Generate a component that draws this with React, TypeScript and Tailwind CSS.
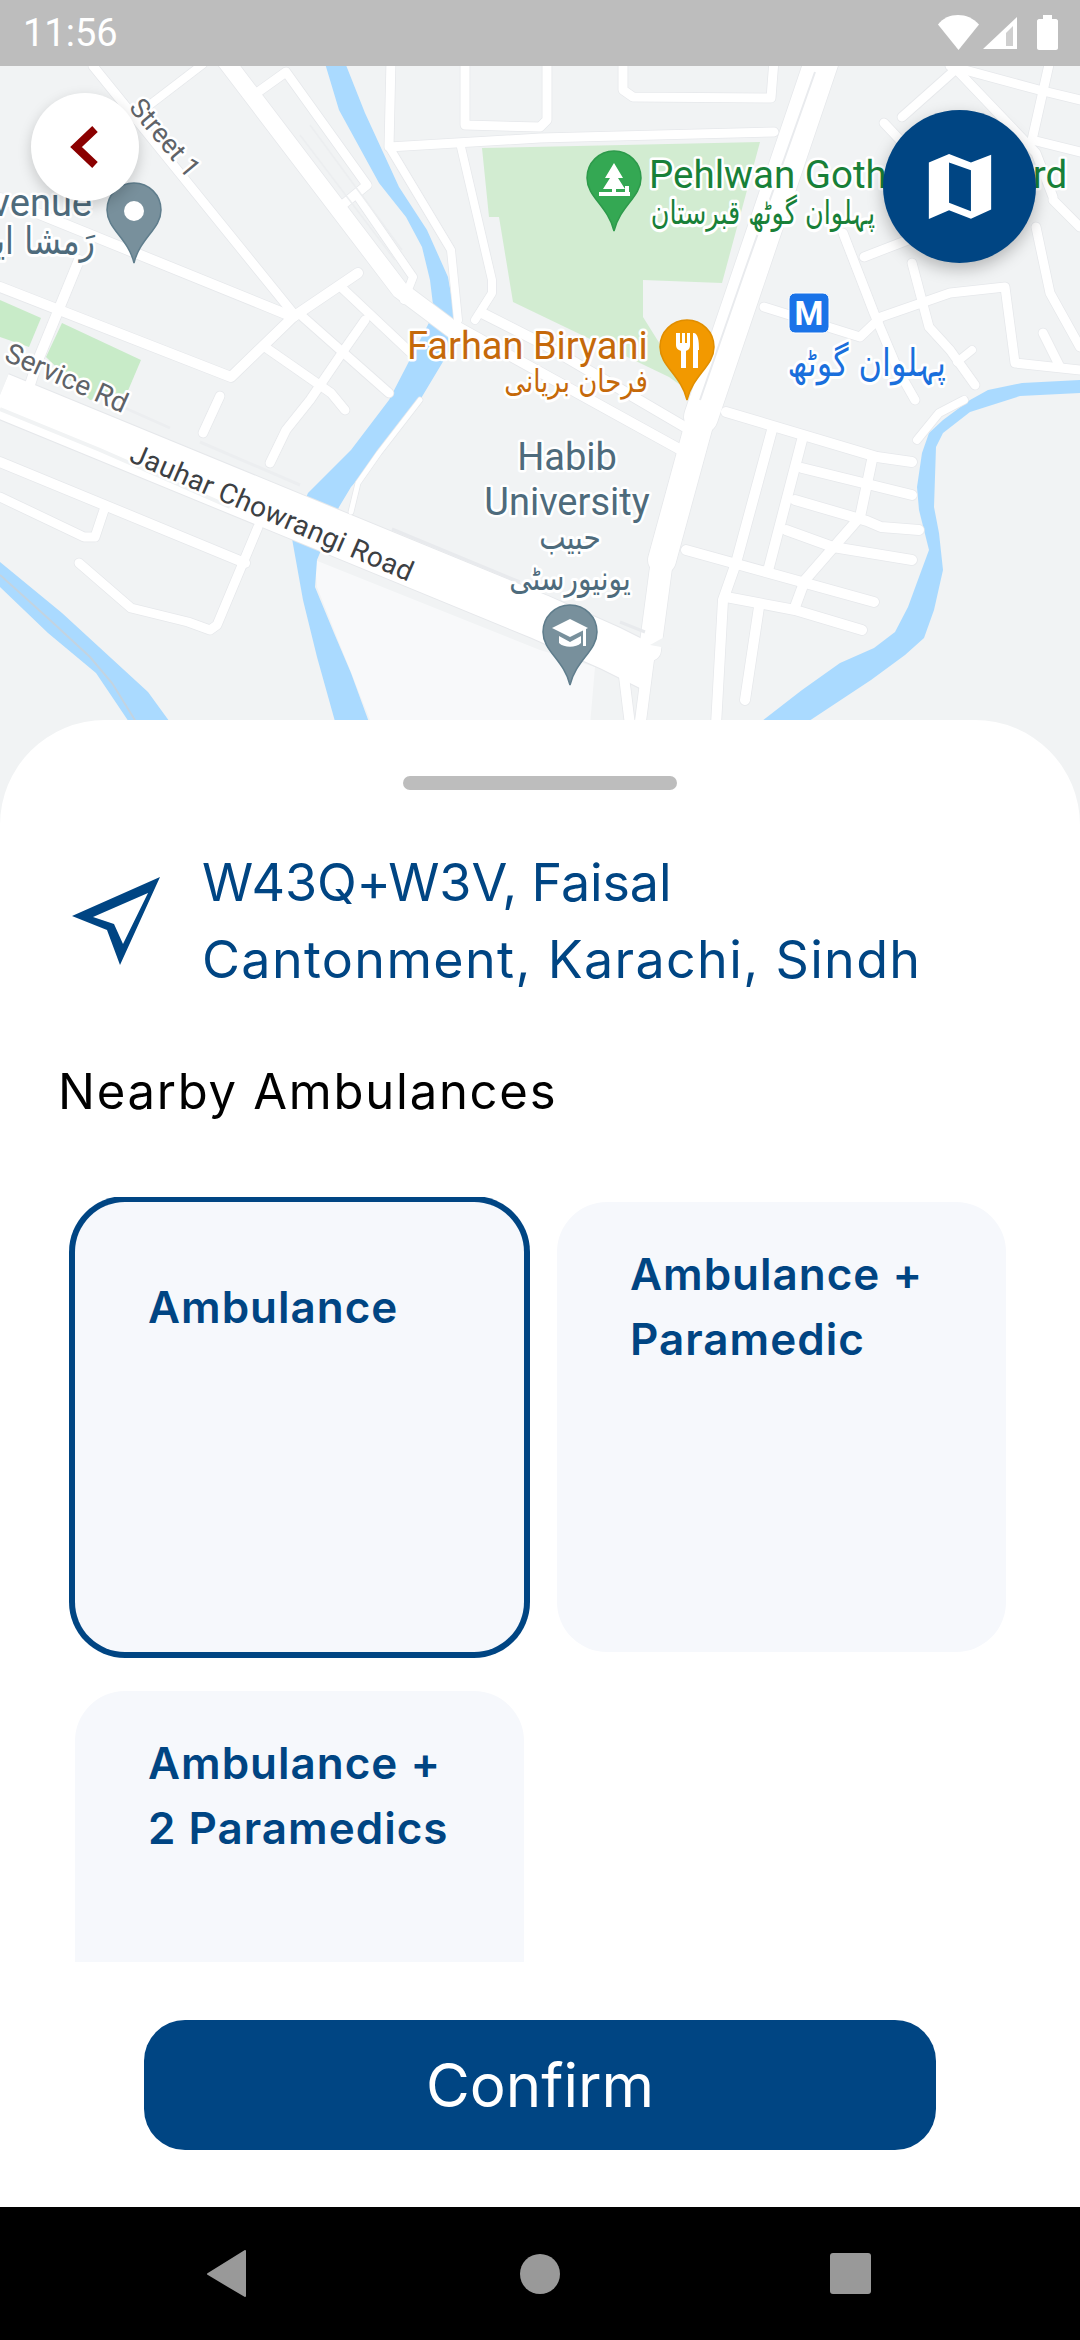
type Pt = [number, number]

const MAP_HEIGHT = 760

// roads: [width, points]
const roads: [number, Pt[]][] = [
  [9, [[93, 66], [293, 313]]],
  [17, [[225, 60], [400, 290], [460, 335]]],
  [9, [[251, 97], [286, 72], [367, 185], [340, 207]]],
  [8, [[358, 197], [413, 277], [404, 300]]],
  [8, [[143, 110], [203, 64]]],
  [10, [[0, 198], [293, 317]]],
  [10, [[0, 287], [231, 377], [293, 317], [358, 273]]],
  [10, [[79, 260], [38, 360], [25, 400]]],
  [9, [[303, 317], [389, 393]]],
  [9, [[341, 287], [410, 352]]],
  [9, [[365, 320], [344, 350], [310, 400], [286, 430], [270, 463]]],
  [9, [[265, 347], [331, 393], [345, 410]]],
  [9, [[220, 396], [203, 433]]],
  [10, [[0, 462], [245, 563]]],
  [9, [[0, 497], [84, 537], [95, 537], [105, 507]]],
  [9, [[79, 563], [131, 608], [188, 622], [210, 630], [217, 625], [258, 527]]],
  [5, [[420, 400], [379, 453], [358, 483], [351, 512]]],
  [9, [[391, 60], [389, 147], [540, 138], [774, 132]]],
  [9, [[465, 60], [465, 125], [540, 127], [547, 120], [547, 60]]],
  [9, [[623, 60], [623, 90], [633, 97], [771, 98], [774, 60]]],
  [8, [[391, 150], [451, 250], [458, 320]]],
  [8, [[461, 147], [492, 280], [492, 293], [475, 320]]],
  [10, [[482, 313], [545, 345], [690, 430]]],
  [10, [[458, 327], [681, 450]]],
  [34, [[822, 60], [701, 417]]],
  [28, [[701, 417], [662, 560]]],
  [22, [[662, 560], [650, 650]]],
  [11, [[651, 640], [640, 725]]],
  [10, [[622, 660], [630, 725]]],
  [10, [[726, 412], [877, 457], [912, 462]]],
  [10, [[802, 468], [912, 495]]],
  [10, [[795, 500], [867, 521], [881, 527], [919, 530]]],
  [10, [[786, 530], [833, 547], [912, 560]]],
  [10, [[686, 550], [874, 602]]],
  [10, [[726, 597], [795, 610], [862, 630]]],
  [10, [[772, 430], [736, 563], [723, 600], [716, 725]]],
  [10, [[802, 440], [769, 567]]],
  [10, [[872, 460], [860, 517], [805, 580], [795, 607]]],
  [10, [[759, 607], [745, 700]]],
  [8, [[917, 440], [939, 413], [964, 400]]],
  [9, [[955, 70], [902, 117]]],
  [9, [[884, 123], [900, 140]]],
  [9, [[953, 66], [1036, 153], [1053, 197]]],
  [9, [[950, 66], [1039, 90], [1080, 100]]],
  [9, [[1050, 60], [1032, 140], [1080, 152]]],
  [9, [[843, 233], [874, 313], [898, 370], [915, 400]]],
  [9, [[864, 257], [908, 240]]],
  [9, [[912, 263], [929, 327], [950, 350], [975, 385]]],
  [9, [[764, 307], [860, 337], [881, 317], [950, 293], [1005, 287], [1015, 363], [1080, 370]]],
  [9, [[1043, 333], [1060, 367]]],
  [9, [[1036, 227], [1050, 293], [1080, 347]]],
  [9, [[1053, 200], [1080, 227]]],
  [8, [[957, 362], [972, 350]]],
]

const line = (p: Pt[]) => p.map((q) => q.join(',')).join(' ')

function Pin({ x, y, fill, rim, children }: { x: number; y: number; fill: string; rim: string; children?: React.ReactNode }) {
  return (
    <g transform={`translate(${x} ${y})`}>
      <path
        d="M0 0C15 0 27 12 27 27C27 46 6 55 0 80C-6 55 -27 46 -27 27C-27 12 -15 0 0 0Z"
        fill={fill}
        stroke={rim}
        strokeWidth="1.5"
      />
      {children}
    </g>
  )
}

function MapLayer() {
  const halo = { paintOrder: 'stroke', stroke: '#ffffff', strokeWidth: 5, strokeLinejoin: 'round' as const }
  const roboto = 'Roboto, sans-serif'
  const urdu = '"DejaVu Sans", sans-serif'

  return (
    <svg className="block h-[760px] w-[1080px]" viewBox={`0 66 1080 ${MAP_HEIGHT}`}>
      <rect x="0" y="66" width="1080" height={MAP_HEIGHT} fill="#f1f3f4" />
      {/* parks */}
      <path d="M482 148L760 142L722 283L643 280L643 317L690 392L669 377L513 302L499 217L489 217Z" fill="#d2ecd1" />
      <path d="M0 300L41 318L29 347L0 337Z" fill="#c8ebc8" />
      <path d="M62 323L141 360L127 393L90 400L46 357Z" fill="#c8ebc8" />
      {/* university grounds */}
      <path d="M315 560L540 650L595 667L590 725L372 725L317 587Z" fill="#f8f9fa" />
      {/* water */}
      <path
        d="M324 60L339 110L379 183L406 217L422 247L430 280L434 313L389 400L351 450L308 493L291 533L303 600L317 657L336 725L370 725L351 673L334 633L315 587L317 560L339 507L351 487L389 443L420 400L456 340L456 323L448 277L427 230L399 187L365 113L344 60Z"
        fill="#aadaff"
      />
      <path d="M0 562L62 613L148 692L172 725L131 725L96 673L48 633L0 587Z" fill="#aadaff" />
      <path d="M0 575L50 620L90 657L112 683L138 725" fill="none" stroke="#c3d3e0" strokeWidth="2" />
      <path
        d="M1080 380L1022 383L988 390L970 400L943 420L929 433L922 453L917 487L919 510L929 550L919 577L908 607L895 632L874 648L840 663L802 690L757 725L803 725L871 680L905 655L924 638L934 610L943 570L939 533L934 507L936 447L943 433L970 412L1020 396L1080 393Z"
        fill="#aadaff"
      />
      {/* roads */}
      {roads.map(([w, pts], i) => (
        <polyline key={`o${i}`} points={line(pts)} fill="none" stroke="#e6e8eb" strokeWidth={w + 1.5} strokeLinecap="round" strokeLinejoin="round" />
      ))}
      <polyline points="0,395 540,617 610,648 650,668" fill="none" stroke="#e6e8eb" strokeWidth="47" />
      <polyline points="0,395 540,617 610,648 650,668" fill="none" stroke="#ffffff" strokeWidth="45" />
      {roads.map(([w, pts], i) => (
        <polyline key={`i${i}`} points={line(pts)} fill="none" stroke="#ffffff" strokeWidth={w} strokeLinecap="round" strokeLinejoin="round" />
      ))}
      {/* slivers of the divided carriageways */}
      <path d="M0 409L100 450L230 507" fill="none" stroke="#f1f3f4" strokeWidth="4" />
      <path d="M125 408L170 428M200 442L300 485" fill="none" stroke="#eceef0" strokeWidth="3" />
      <path d="M392 529L520 582M620 622L645 632" fill="none" stroke="#e8eaed" strokeWidth="3" />
      <path d="M815 72L745 270L700 400" fill="none" stroke="#e9ebee" strokeWidth="2" />
      <path d="M300 135L395 260M310 125L402 250" fill="none" stroke="#eceef0" strokeWidth="1.5" />
      <path d="M686 625L678 650L650 645" fill="#f1f3f4" />
      {/* labels */}
      <g fontFamily={roboto} fontSize="27" fill="#5f6368">
        <text transform="translate(128 108) rotate(50)" style={halo}>Street 1</text>
        <text transform="translate(3 360) rotate(24)" fontSize="28" style={halo}>Service Rd</text>
      </g>
      <text transform="translate(128 461) rotate(23.3)" fontFamily={roboto} fontSize="28" fill="#3c4043" letterSpacing="0.4" style={halo}>
        Jauhar Chowrangi Road
      </text>
      <g fontFamily={roboto} fontSize="38" fill="#4e6b7c" style={halo}>
        <text x="92" y="216" textAnchor="end">venue</text>
        <text x="567" y="470" textAnchor="middle">Habib</text>
        <text x="567" y="515" textAnchor="middle">University</text>
      </g>
      <g fontFamily={urdu} fill="#4e6b7c" style={halo}>
        <text transform="translate(95 254) scale(1 1.2)" fontSize="32" direction="rtl">رَمشا ایو</text>
        <text transform="translate(570 549) scale(1 1.2)" textAnchor="middle" fontSize="28" direction="rtl">حبیب</text>
        <text transform="translate(570 590) scale(1 1.2)" textAnchor="middle" fontSize="28" direction="rtl">یونیورسٹی</text>
      </g>
      <text x="649" y="188" fontFamily={roboto} fontSize="38.5" fill="#188038" style={halo}>Pehlwan Goth Graveyard</text>
      <text transform="translate(875 224) scale(1 1.3)" direction="rtl" fontFamily={urdu} fontSize="25.5" fill="#188038" style={halo}>پہلوان گوٹھ قبرستان</text>
      <text x="407" y="359" fontFamily={roboto} fontSize="38" fill="#c5690a" style={halo}>Farhan Biryani</text>
      <text transform="translate(648 392) scale(1 1.2)" direction="rtl" fontFamily={urdu} fontSize="26" fill="#c5690a" style={halo}>فرحان بریانی</text>
      <text transform="translate(946 376) scale(1 1.2)" direction="rtl" fontFamily={urdu} fontSize="32" fill="#1a6fdc" style={halo}>پہلوان گوٹھ</text>
      {/* pins */}
      <Pin x={134} y={183} fill="#78909c" rim="#5f7d8c">
        <circle cx="0" cy="28" r="10" fill="#ffffff" />
      </Pin>
      <Pin x={614} y={151} fill="#34a853" rim="#2d9a4b">
        <path d="M0 12L9 27H4L11 38H-11L-4 27H-9Z" fill="#ffffff" />
        <rect x="-15" y="41" width="31" height="4" fill="#ffffff" />
        <rect x="-2" y="36" width="4" height="6" fill="#ffffff" />
        <rect x="11" y="35" width="4" height="7" fill="#ffffff" />
      </Pin>
      <Pin x={687} y={320} fill="#f29900" rim="#e08e00">
        <path d="M-11 13V25C-11 29 -8 30 -6 31V48H-1V31C1 30 3 29 3 25V13H0V23H-2V13H-5V23H-7V13Z" fill="#ffffff" />
        <path d="M7 13C11 14 12 20 12 30H11V48H6V13Z" fill="#ffffff" />
      </Pin>
      <Pin x={570} y={605} fill="#78909c" rim="#5f7d8c">
        <path d="M-18 23L0 14L18 23L0 32Z" fill="#ffffff" />
        <path d="M-11 31L0 37L11 31V38C6 43 -6 43 -11 38Z" fill="#ffffff" />
        <rect x="13" y="24" width="3" height="17" fill="#ffffff" />
      </Pin>
      {/* metro */}
      <rect x="789" y="293" width="40" height="40" rx="6" fill="#1a73e8" stroke="#ffffff" strokeWidth="1" />
      <text x="809" y="325" textAnchor="middle" fontFamily={roboto} fontSize="33" fontWeight="700" fill="#ffffff">M</text>
    </svg>
  )
}

function StatusBar() {
  return (
    <div className="flex h-[66px] items-center justify-between bg-[#bdbdbd] pl-[23px] pr-[22px]">
      <span className="font-['Roboto',sans-serif] text-[38px] leading-none text-white">11:56</span>
      <svg className="h-[36px] w-[120px]" viewBox="0 0 120 36">
        <path d="M0 9.5C5 3 12 0 20 0C28 0 35 3 41 9.5L20.5 35Z" fill="#ffffff" />
        <path d="M79 2V34H45Z" fill="#ffffff" />
        <path d="M68 18L75 11V31H68Z" fill="#cfcfcf" />
        <path d="M99 6C99 5 100 4 101 4H105V0H114V4H118C119 4 120 5 120 6V33C120 34 119 35 118 35H101C100 35 99 34 99 33Z" fill="#ffffff" />
      </svg>
    </div>
  )
}

function NavBar() {
  return (
    <div className="flex h-[133px] items-center bg-black">
      <svg className="ml-[205px] h-[47px] w-[42px]" viewBox="0 0 42 47">
        <path d="M40 1V46L3 24Z" fill="#999999" stroke="#999999" strokeWidth="2" strokeLinejoin="round" />
      </svg>
      <div className="ml-[273px] size-[40px] rounded-full bg-[#999999]" />
      <div className="ml-[270px] size-[41px] rounded-[3px] bg-[#999999]" />
    </div>
  )
}

function AmbulanceCard({ label, second, selected = false }: { label: string; second?: string; selected?: boolean }) {
  return (
    <div className={`h-[450px] rounded-[50px] bg-[#f6f8fc] ${selected ? 'ring-[6px] ring-[#004583]' : ''}`}>
      <div className="flex h-[210px] flex-col justify-center pl-[73px] font-['Inter',sans-serif] text-[44px] font-semibold leading-[65px] tracking-[1px] text-[#004583]">
        <div>{label}</div>
        {second ? <div>{second}</div> : null}
      </div>
    </div>
  )
}

export default function App() {
  return (
    <div className="relative h-[2340px] w-[1080px] overflow-hidden bg-white">
      <StatusBar />
      <div className="relative h-[760px]">
        <MapLayer />
        <button className="absolute left-[31px] top-[27px] flex size-[108px] items-center justify-center rounded-full bg-white shadow-[0_5px_14px_rgba(0,0,0,0.18)]">
          <svg className="h-[44px] w-[32px]" viewBox="0 0 32 44">
            <path d="M26 4L7 22L26 40" fill="none" stroke="#8b0000" strokeWidth="8" />
          </svg>
        </button>
        <button className="absolute left-[883px] top-[44px] flex size-[153px] items-center justify-center rounded-full bg-[#004583] shadow-[0_6px_16px_rgba(0,0,0,0.25)]">
          <svg className="h-[65px] w-[64px]" viewBox="1125 285 185 193">
            <path
              fillRule="evenodd"
              d="M1125 310L1185 285L1250 310L1310 287V450L1250 477L1185 452L1125 478ZM1185 310V430L1250 455V333Z"
              fill="#ffffff"
            />
          </svg>
        </button>
      </div>

      <div className="relative z-10 -mt-[106px] flex h-[1487px] flex-col rounded-t-[105px] bg-white">
        <div className="mx-auto mt-[56px] h-[14px] w-[274px] rounded-full bg-[#bdbdbd]" />

        <div className="mt-[54px] flex items-center pl-[72px]">
          <svg className="h-[88px] w-[88px] shrink-0" viewBox="72 877 88 88">
            <path fillRule="evenodd" d="M160 877L120 965L107 930L72 916ZM148 893L93 917L114 924L123 944Z" fill="#004583" />
          </svg>
          <div className="ml-[42px] font-['Inter',sans-serif] text-[52px] font-normal leading-[77px] text-[#004583]">
            <div className="tracking-[-0.1px]">W43Q+W3V, Faisal</div>
            <div className="tracking-[1.35px]">Cantonment, Karachi, Sindh</div>
          </div>
        </div>

        <div className="ml-[58px] mt-[64px] font-['Inter',sans-serif] text-[49px] font-normal leading-[60px] tracking-[1.75px] text-black">Nearby Ambulances</div>

        <div className="mt-[75px] h-[765px] overflow-hidden pl-[75px] pt-[5px]">
          <div className="grid grid-cols-[449px_449px] gap-x-[33px] gap-y-[39px]">
            <AmbulanceCard label="Ambulance" selected />
            <AmbulanceCard label="Ambulance +" second="Paramedic" />
            <AmbulanceCard label="Ambulance +" second="2 Paramedics" />
          </div>
        </div>

        <button className="mx-auto mt-[58px] flex h-[130px] w-[792px] items-center justify-center rounded-[41px] bg-[#004583] font-['Inter',sans-serif] text-[60px] font-normal text-white">
          Confirm
        </button>
      </div>

      <NavBar />
    </div>
  )
}
